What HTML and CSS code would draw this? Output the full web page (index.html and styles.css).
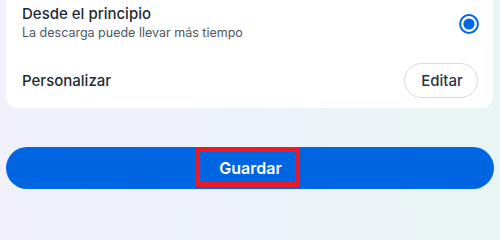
FILE: index.html
```html
<!DOCTYPE html>
<html lang="es">
<head>
<meta charset="utf-8">
<title>Guardar</title>
<link rel="stylesheet" href="styles.css">
</head>
<body>
<div class="page">
  <section class="card">
    <div class="row row-option">
      <div class="texts">
        <div class="title">Desde el principio</div>
        <div class="subtitle">La descarga puede llevar más tiempo</div>
      </div>
      <svg class="radio" width="20" height="20" viewBox="0 0 20 20" aria-hidden="true">
        <circle cx="10" cy="10" r="8.9" fill="none" stroke="#0066e1" stroke-width="2"/>
        <circle cx="10" cy="10" r="5.6" fill="#0066e1"/>
      </svg>
    </div>
    <div class="row row-custom">
      <div class="label">Personalizar</div>
      <button class="edit">Editar</button>
    </div>
  </section>
  <button class="save"><span class="save-text">Guardar</span><span class="highlight"></span></button>
</div>
</body>
</html>
```

FILE: styles.css
```css
html, body {
  margin: 0;
  padding: 0;
}
html {
  background: linear-gradient(90deg, #f1f0fa 0%, #edf2f8 50%, #e8f5f4 100%);
}
body {
  width: 500px;
  height: 201px;
  overflow: hidden;
  font-family: Inter, "Noto Sans", sans-serif;
}
.page {
  display: flex;
  flex-direction: column;
}
.card {
  background: #ffffff;
  margin: 0 7px 0 6px;
  padding: 0 15px 10px 16px;
  border-radius: 0 0 12px 12px;
}
.row {
  display: flex;
  align-items: center;
  justify-content: space-between;
}
.row-option {
  padding: 4px 0 3px;
}
.texts {
  display: flex;
  flex-direction: column;
}
.title {
  font-size: 15px;
  line-height: 20px;
  font-weight: 500;
  color: #1f2b35;
}
.subtitle {
  font-size: 12.5px;
  line-height: 17px;
  font-weight: 400;
  color: #4b5762;
}
.radio {
  display: block;
  margin-top: 3px;
  margin-right: -1px;
}
.row-custom {
  padding-top: 19px;
}
.label {
  font-size: 15px;
  line-height: 20px;
  font-weight: 500;
  color: #1f2b35;
}
.edit {
  height: 35px;
  width: 74px;
  padding: 0 0 0 2px;
  border: 1px solid #d6dadf;
  border-radius: 18px;
  background: #ffffff;
  font-family: Inter, "Noto Sans", sans-serif;
  font-size: 15px;
  font-weight: 500;
  color: #2a353f;
}
.save {
  position: relative;
  margin: 39px 6px 0 6px;
  height: 42px;
  border: none;
  border-radius: 21px;
  background: #0065e0;
  display: flex;
  align-items: center;
  justify-content: center;
  padding: 0 0 0 1px;
  font-family: Inter, "Noto Sans", sans-serif;
}
.save-text {
  font-size: 16px;
  font-weight: 600;
  color: #ffffff;
}
.highlight {
  position: absolute;
  left: 189px;
  top: 0;
  width: 95px;
  height: 30px;
  border: 5px solid #e81b2b;
}
```
